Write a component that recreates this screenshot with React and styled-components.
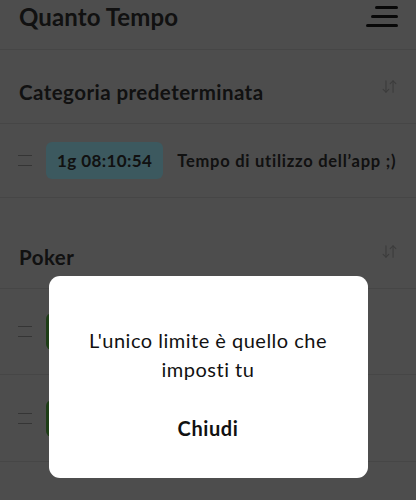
import React, { useState } from 'react';
import styled, { createGlobalStyle } from 'styled-components';
import { ArrowDownUp } from 'lucide-react';

const GlobalStyle = createGlobalStyle`
   html, body {
      margin: 0;
      padding: 0;
      background: #9a9a9a;
   }
   body {
      font-family: Lato, 'Noto Sans', sans-serif;
      color: #222;
   }
`;

const Page = styled.div`
   position: relative;
   width: 416px;
   height: 500px;
   overflow: hidden;
   background: #9a9a9a;
`;

const Header = styled.header`
   display: flex;
   align-items: flex-start;
   justify-content: space-between;
   height: 50px;
   padding: 2px 18px 0 19px;
   box-sizing: border-box;
   border-bottom: 1px solid #8c8c8c;
   h1 {
      margin: 0;
      font-size: 24px;
      line-height: 30px;
      font-weight: 700;
      letter-spacing: 0.1px;
   }
`;

const Burger = styled.svg`
   width: 32px;
   height: 22px;
   margin-top: 4px;
`;

const Section = styled.section`
   margin-top: ${(p) => p.$gap}px;
`;

const SectionHead = styled.div`
   display: flex;
   align-items: center;
   justify-content: space-between;
   height: 63px;
   padding: 0 18px 0 19px;
   border-bottom: 1px solid #8c8c8c;
   h2 {
      margin: 0;
      font-size: 20.5px;
      font-weight: 700;
      letter-spacing: 0.45px;
   }
   svg {
      color: #787878;
      margin-top: -11px;
   }
`;

const Row = styled.div`
   display: flex;
   align-items: center;
   gap: 14px;
   height: ${(p) => p.$h}px;
   padding: 0 18px;
   border-bottom: 1px solid #8c8c8c;
`;

const Handle = styled.div`
   display: flex;
   flex-direction: column;
   gap: 9px;
   width: 14px;
   span {
      display: block;
      height: 1px;
      background: #6a6a6a;
   }
`;

const Badge = styled.div`
   padding: 8px 11px;
   border-radius: 6px;
   background: ${(p) => p.$bg};
   font-size: 17px;
   font-weight: 700;
   letter-spacing: 0.4px;
`;

const Label = styled.span`
   font-size: 16.5px;
   font-weight: 700;
   letter-spacing: 0.75px;
`;

const Overlay = styled.div`
   position: absolute;
   inset: 0;
   display: flex;
   align-items: flex-end;
   justify-content: center;
   padding-bottom: 22px;
   background: rgba(0, 0, 0, 0.5);
`;

const Dialog = styled.div`
   display: flex;
   flex-direction: column;
   align-items: center;
   width: 319px;
   height: 202px;
   box-sizing: border-box;
   padding-top: 50px;
   background: #fff;
   border-radius: 11px;
   color: #111;
   p {
      margin: 0;
      font-size: 20px;
      line-height: 29px;
      letter-spacing: 0.5px;
      text-align: center;
      width: 270px;
   }
`;

const CloseButton = styled.button`
   margin-top: 32px;
   padding: 0;
   border: none;
   background: none;
   font-family: inherit;
   font-size: 20px;
   font-weight: 700;
   letter-spacing: 0.6px;
   color: #111;
   cursor: pointer;
`;

const DragHandle = () => (
   <Handle>
      <span />
      <span />
   </Handle>
);

const App = () => {
   const [open, setOpen] = useState(true);

   return (
      <Page>
         <GlobalStyle />
         <Header>
            <h1>Quanto Tempo</h1>
            <Burger viewBox='0 0 32 22'>
               <rect x='9' y='0' width='23' height='3' rx='1.5' fill='#111' />
               <rect x='5' y='9' width='27' height='3' rx='1.5' fill='#111' />
               <rect x='0' y='18' width='32' height='3' rx='1.5' fill='#111' />
            </Burger>
         </Header>

         <Section $gap={10}>
            <SectionHead>
               <h2>Categoria predeterminata</h2>
               <ArrowDownUp size={17} strokeWidth={1.6} />
            </SectionHead>
            <Row $h={73}>
               <DragHandle />
               <Badge $bg='#78b2be'>1g 08:10:54</Badge>
               <Label>Tempo di utilizzo dell’app ;)</Label>
            </Row>
         </Section>

         <Section $gap={27}>
            <SectionHead>
               <h2>Poker</h2>
               <ArrowDownUp size={17} strokeWidth={1.6} />
            </SectionHead>
            <Row $h={85}>
               <DragHandle />
               <Badge $bg='#3a7a2c'>0g 01:24:10</Badge>
            </Row>
            <Row $h={86}>
               <DragHandle />
               <Badge $bg='#3a7a2c'>0g 00:42:37</Badge>
            </Row>
         </Section>

         {open && (
            <Overlay>
               <Dialog>
                  <p>L'unico limite è quello che imposti tu</p>
                  <CloseButton onClick={() => setOpen(false)}>Chiudi</CloseButton>
               </Dialog>
            </Overlay>
         )}
      </Page>
   );
};

export default App;
